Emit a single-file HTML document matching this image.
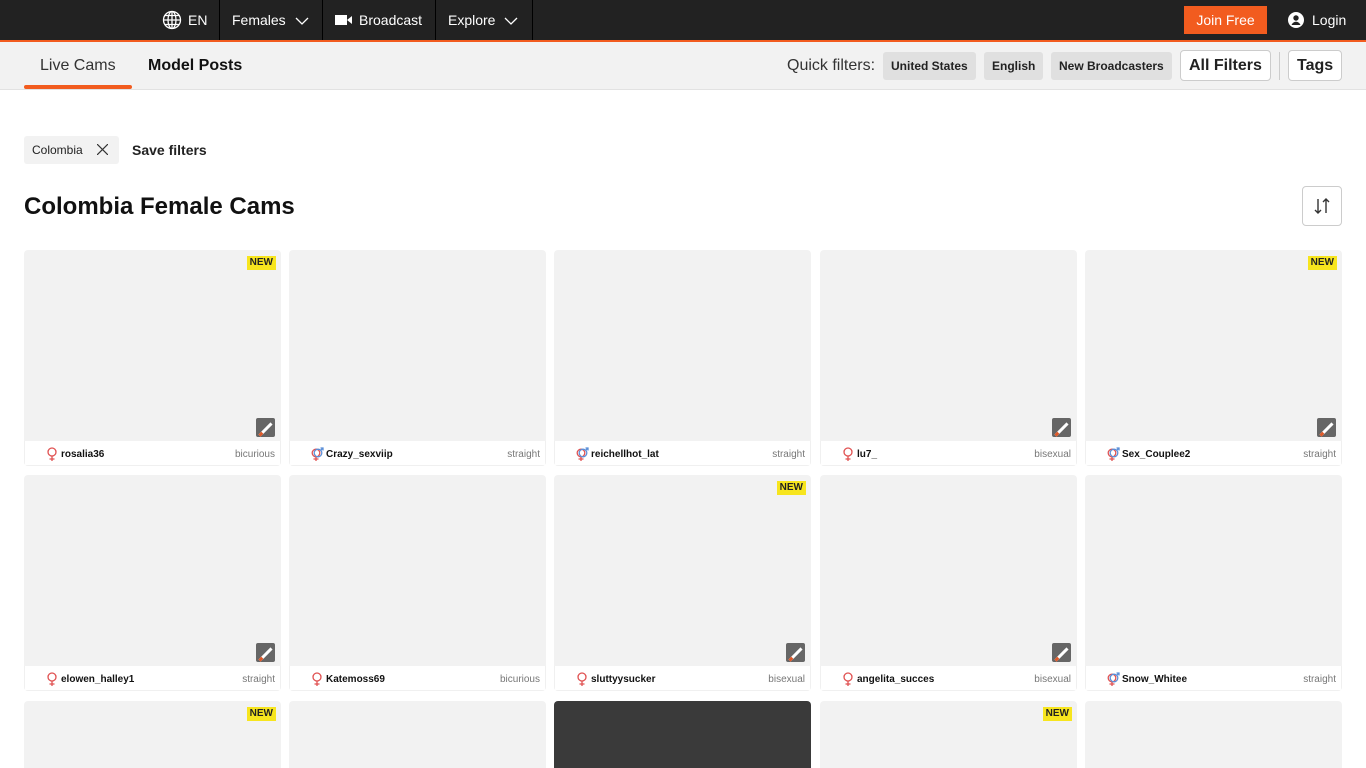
<!DOCTYPE html>
<html style="width:1366px;height:768px;overflow:hidden"><head><meta charset="utf-8"><style>
*{box-sizing:border-box;margin:0;padding:0}
body{width:1366px;height:768px;overflow:hidden;background:#fff;font-family:"Liberation Sans",Arial,sans-serif;position:relative;color:#222}
.top{position:absolute;left:0;top:0;width:1366px;height:42px;background:#222;border-bottom:2px solid #f25c1f}
.ni{position:absolute;top:0;height:40px;color:#fff;font-size:14px;line-height:40px;border-right:1px solid #000}
.sub{position:absolute;top:42px;left:0;width:1366px;height:48px;background:#f2f2f2;border-bottom:1px solid #e2e2e2}
.a{position:absolute;font-size:16px}
.qf{position:absolute;top:52px;height:28px;background:#e0e0e0;border-radius:3px;font-size:12px;font-weight:bold;line-height:28px;padding:0 8px;color:#222}
.bb{position:absolute;top:50px;height:31px;background:#fff;border:1px solid #ccc;border-radius:4px;font-size:16px;font-weight:bold;line-height:30px;padding:0 8px}
.card{position:absolute;width:257px;height:216px;background:#f2f2f2;border-radius:4px;overflow:hidden}
.ft{position:absolute;left:0;bottom:0;width:100%;height:25px;background:#fff;border:1px solid #f0f0f0;border-top:none}
.nm{position:absolute;left:36px;top:8px;font-size:10px;font-weight:bold;color:#111}
.or{position:absolute;right:5px;top:8px;font-size:10px;color:#777}
.ic{position:absolute;left:20px;top:6px;width:14px;height:14px}
.new{position:absolute;right:5px;top:6px;background:#f7e51e;font-size:10px;font-weight:bold;padding:1px 3px;line-height:12px;color:#222}
.pen{position:absolute;right:6px;top:168px;width:19px;height:19px;background:#666;border-radius:2px}
.pen:after{content:"";position:absolute;left:8px;top:3px;width:3px;height:13px;background:#fff;transform:rotate(45deg);border-bottom:4px solid #e05a2a}
</style></head><body>
<div class="top">
<div class="ni" style="left:150px;width:70px;border-left:none;padding-left:12px"><svg width="20" height="20" viewBox="0 0 20 20" style="position:absolute;left:12px;top:10px" fill="none" stroke="#fff" stroke-width="1.3"><circle cx="10" cy="10" r="8.5"/><ellipse cx="10" cy="10" rx="4" ry="8.5"/><path d="M1.5 10h17M3 5.5h14M3 14.5h14M10 1.5v17"/></svg><span style="position:absolute;left:38px">EN</span></div>
<div class="ni" style="left:220px;width:103px;padding-left:12px">Females <svg width="14" height="8" viewBox="0 0 14 8" style="margin-left:5px" fill="none" stroke="#fff" stroke-width="1.3"><path d="M1 1l6 6 6-6"/></svg></div>
<div class="ni" style="left:323px;width:113px;padding-left:12px"><svg width="18" height="12" viewBox="0 0 18 12" style="vertical-align:-1px;margin-right:6px"><rect x="0" y="1" width="12" height="10" fill="#fff"/><path d="M12 6l5-4v8z" fill="#fff"/></svg>Broadcast</div>
<div class="ni" style="left:436px;width:97px;padding-left:12px">Explore <svg width="14" height="8" viewBox="0 0 14 8" style="margin-left:5px" fill="none" stroke="#fff" stroke-width="1.3"><path d="M1 1l6 6 6-6"/></svg></div>
<div style="position:absolute;left:1184px;top:6px;width:83px;height:28px;background:#f25c1f;color:#fff;font-size:14px;line-height:28px;text-align:center">Join Free</div>
<svg width="16" height="16" viewBox="0 0 16 16" style="position:absolute;left:1288px;top:12px"><circle cx="8" cy="8" r="8" fill="#fff"/><circle cx="8" cy="6" r="2.7" fill="#222"/><path d="M3.5 13c1-2.5 3-3.3 4.5-3.3s3.5.8 4.5 3.3" fill="#222"/></svg>
<div style="position:absolute;left:1312px;top:0;line-height:40px;color:#fff;font-size:14px">Login</div>
</div>
<div class="sub">
<div class="a" style="left:40px;top:15px;color:#333">Live Cams</div>
<div style="position:absolute;left:24px;top:43px;width:108px;height:4px;background:#f25c1f;border-radius:2px"></div>
<div class="a" style="left:148px;top:15px;font-weight:bold;color:#111">Model Posts</div>
<div class="a" style="left:787px;top:15px;color:#333">Quick filters:</div>
</div>
<div class="qf" style="left:883px">United States</div>
<div class="qf" style="left:984px">English</div>
<div class="qf" style="left:1051px">New Broadcasters</div>
<div class="bb" style="left:1180px;width:91px">All Filters</div>
<div style="position:absolute;left:1279px;top:52px;width:1px;height:28px;background:#ccc"></div>
<div class="bb" style="left:1288px;width:54px">Tags</div>

<div style="position:absolute;left:24px;top:136px;width:95px;height:28px;background:#f2f2f2;border-radius:3px;font-size:12px;line-height:28px;padding-left:8px">Colombia<svg width="11" height="11" viewBox="0 0 11 11" style="position:absolute;left:73px;top:8px" stroke="#333" stroke-width="1.2"><path d="M0 0l11 11M11 0L0 11"/></svg></div>
<div style="position:absolute;left:132px;top:142px;font-size:14px;font-weight:bold">Save filters</div>
<div style="position:absolute;left:24px;top:193px;font-size:24px;font-weight:bold;color:#111">Colombia Female Cams</div>
<div style="position:absolute;left:1302px;top:186px;width:40px;height:40px;border:1px solid #ccc;border-radius:4px"><svg width="18" height="18" viewBox="0 0 18 18" style="position:absolute;left:10px;top:10px" fill="none" stroke="#333" stroke-width="1.4"><path d="M5 2v14M2 13l3 3 3-3M13 16V2M10 5l3-3 3 3"/></svg></div>

<div id="g"></div>
<script>
var L=[24,289,554,820,1085],T=[250,475,701];
var F='<svg class="ic" viewBox="0 0 14 14" fill="none" stroke="#e05050" stroke-width="1.3"><circle cx="7" cy="5" r="4"/><path d="M7 9v5M4.5 12h5"/></svg>';
var C='<svg class="ic" viewBox="0 0 14 14" fill="none" stroke-width="1.3"><circle cx="6" cy="6" r="3.8" stroke="#e05050"/><path d="M6 10v4M3.5 12h5" stroke="#e05050"/><circle cx="8" cy="6" r="3.8" stroke="#5b8fd8"/><path d="M10.5 3.5L13 1M10.5 1H13V3.5" stroke="#5b8fd8"/></svg>';
var d=[["rosalia36","bicurious",F,1,1],["Crazy_sexviip","straight",C,0,0],["reichellhot_lat","straight",C,0,0],["lu7_","bisexual",F,0,1],["Sex_Couplee2","straight",C,1,1],
["elowen_halley1","straight",F,0,1],["Katemoss69","bicurious",F,0,0],["sluttyysucker","bisexual",F,1,1],["angelita_succes","bisexual",F,0,1],["Snow_Whitee","straight",C,0,0],
["","","",1,0],["","","",0,0],["","","",0,0],["","","",1,0],["","","",0,0]];
var h="";
d.forEach(function(c,i){var r=Math.floor(i/5),k=i%5;
var ht=r==2?(768-T[2]):216;
h+='<div class="card" style="left:'+L[k]+'px;top:'+T[r]+'px;height:'+ht+'px'+(i==12?';background:#3a3a3a':'')+(r==2?';border-radius:4px 4px 0 0':'')+'">'+(c[3]?'<div class="new">NEW</div>':'')+(c[4]?'<div class="pen"></div>':'')+(c[0]?'<div class="ft">'+c[2]+'<div class="nm">'+c[0]+'</div><div class="or">'+c[1]+'</div></div>':'')+'</div>';});
document.getElementById("g").innerHTML=h;
</script>
</body></html>
